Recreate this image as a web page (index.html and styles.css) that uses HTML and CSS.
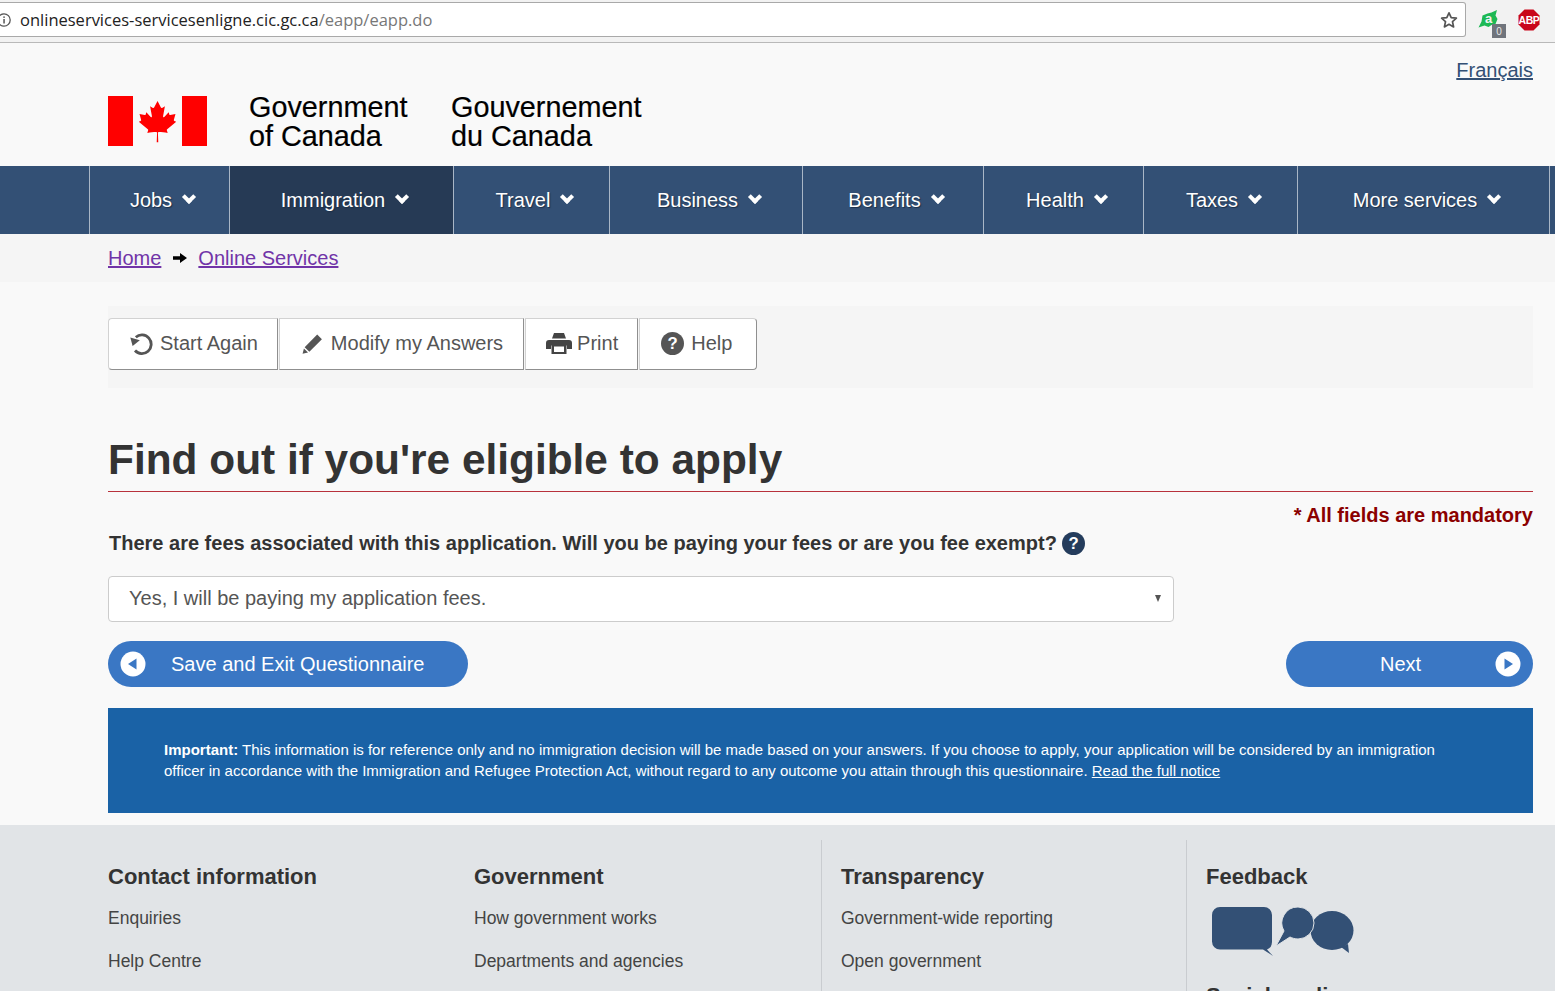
FILE: index.html
```html
<!DOCTYPE html>
<html lang="en">
<head>
  <meta charset="UTF-8" />
  <title>Find out if you're eligible to apply</title>
  <link rel="stylesheet" href="styles.css">
</head>
<body>
  <div class="browser-bar">
    <div class="url-box">
      <svg class="info-icon" viewBox="0 0 16 16"><circle cx="8" cy="8" r="6.200" fill="none" stroke="#555" stroke-width="1.300"/><rect x="7.300" y="7" width="1.500" height="4.500" fill="#555"/><rect x="7.300" y="4.400" width="1.500" height="1.500" fill="#555"/></svg>
      <span class="url">onlineservices-servicesenligne.cic.gc.ca<span class="url-path">/eapp/eapp.do</span></span>
      <svg class="star-icon" viewBox="0 0 18 18"><path d="M9 1.800l2.200 4.800 5.200.6-3.900 3.500 1.100 5.200L9 13.300l-4.600 2.600 1.100-5.200-3.900-3.500 5.200-.6z" fill="none" stroke="#555" stroke-width="1.700" stroke-linejoin="round"/></svg>
    </div>
    <div class="ext ext-green">
      <svg viewBox="0 0 22 22"><path d="M19 1l-1.500 5.500 2 3.500-2 5-4 1-3 2-4-1.500-6 2 3-6 1-6 5-2 4-1z" fill="#1db954"/><text x="10.500" y="13.500" text-anchor="middle" class="ext-a">a</text></svg>
      <span class="ext-count">0</span>
    </div>
    <div class="ext ext-abp">
      <svg viewBox="0 0 22 22"><polygon points="6.500,0.500 15.500,0.500 21.500,6.500 21.500,15.500 15.500,21.500 6.500,21.500 0.500,15.500 0.500,6.500" fill="#c9071a"/><text x="11" y="14.700" text-anchor="middle" class="abp-text">ABP</text></svg>
    </div>
  </div>

  <header class="site-header">
    <a class="lang-link" href="#">Français</a>
    <div class="brand">
      <svg class="flag" viewBox="0 0 99 50">
        <rect x="0" y="0" width="25" height="50" fill="#f00"/>
        <rect x="74" y="0" width="25" height="50" fill="#f00"/>
        <path transform="translate(4 0.500) scale(.92)" fill="#f00" d="M49.500 5l-3.600 6.800c-.4.700-1.100.7-1.900.3l-2.600-1.400 1.900 10.300c.4 1.900-.9 1.900-1.500 1.100l-4.500-5.100-.7 2.600c-.1.300-.5.700-1 .6l-5.700-1.200 1.500 5.500c.3 1.200.6 1.700-.3 2l-2 1 9.800 8c.4.300.6.800.4 1.300l-.9 2.800c3.400-.4 6.400-1 9.800-1 .3 0 .8.300.8.700l-.4 10.300h1.700l-.4-10.300c0-.4.500-.7.800-.7 3.400 0 6.400.6 9.800 1l-.9-2.800c-.2-.5 0-1 .4-1.300l9.800-8-2-1c-.9-.3-.6-.8-.3-2l1.500-5.500-5.700 1.200c-.5.100-.9-.3-1-.6l-.7-2.600-4.500 5.100c-.6.800-1.900.8-1.500-1.100l1.900-10.300-2.600 1.400c-.8.400-1.500.4-1.900-.3z"/>
      </svg>
      <div class="wordmark">Government<br>of Canada</div>
      <div class="wordmark">Gouvernement<br>du Canada</div>
    </div>
  </header>

  <nav class="main-nav">
    <a class="nav-item w-jobs" href="#">Jobs<i class="chev"></i></a>
    <a class="nav-item w-imm active" href="#">Immigration<i class="chev"></i></a>
    <a class="nav-item w-travel" href="#">Travel<i class="chev"></i></a>
    <a class="nav-item w-bus" href="#">Business<i class="chev"></i></a>
    <a class="nav-item w-ben" href="#">Benefits<i class="chev"></i></a>
    <a class="nav-item w-health" href="#">Health<i class="chev"></i></a>
    <a class="nav-item w-tax" href="#">Taxes<i class="chev"></i></a>
    <a class="nav-item w-more" href="#">More services<i class="chev"></i></a>
  </nav>

  <div class="breadcrumb">
    <a href="#">Home</a>
    <svg class="crumb-arrow" viewBox="0 0 14 12"><path d="M0 4.300h7V1l7 5-7 5V7.700H0z" fill="#000"/></svg>
    <a href="#">Online Services</a>
  </div>

  <main class="content">
    <div class="toolbar">
      <div class="btn-group">
        <a class="tool-btn" href="#">
          <svg class="tool-icon" viewBox="0 0 23 23"><path d="M5.800 5.200A9.300 9.300 0 1 1 5 18.500" fill="none" stroke="#555" stroke-width="2.800"/><path d="M0.300 5.500l9.500 2.700-7.200 5.800z" fill="#555"/></svg>
          Start Again
        </a>
        <a class="tool-btn btn-modify" href="#">
          <svg class="tool-icon" viewBox="0 0 22 22"><path d="M15.500 2.500l4.500 4.500L8 19l-4.500-4.500zM2.800 15.700l3.900 3.900-5.200 1.300z" fill="#555"/></svg>
          Modify my Answers
        </a>
        <a class="tool-btn btn-print" href="#">
          <svg class="tool-icon print" viewBox="0 0 26 21"><path d="M8 0h10l2 5.500H6zM3 7h20a3 3 0 0 1 3 3v6h-5v-3.500H5V16H0v-6a3 3 0 0 1 3-3zM5.500 12h15v9h-15z" fill="#444"/><path d="M8 13.500h10v5.500H8z" fill="#fff"/></svg>
          Print
        </a>
        <a class="tool-btn" href="#">
          <svg class="tool-icon" viewBox="0 0 22 22"><circle cx="11" cy="11" r="11" fill="#555"/><text x="11" y="16.500" text-anchor="middle" class="q-mark">?</text></svg>
          Help
        </a>
      </div>
    </div>

    <h1>Find out if you're eligible to apply</h1>
    <p class="mandatory">* All fields are mandatory</p>

    <div class="question">
      There are fees associated with this application. Will you be paying your fees or are you fee exempt?
      <svg class="help-icon" viewBox="0 0 22 22"><circle cx="11" cy="11" r="11" fill="#243c5c"/><text x="11" y="16.500" text-anchor="middle" class="q-mark">?</text></svg>
    </div>

    <div class="select-box">
      <span>Yes, I will be paying my application fees.</span>
      <i class="select-arrow"></i>
    </div>

    <div class="actions">
      <a class="pill pill-save" href="#">
        <svg class="pill-icon" viewBox="0 0 26 26"><circle cx="13" cy="13" r="12.500" fill="#fff"/><path d="M16.500 7.500v11L8 13z" fill="#3a77c4"/></svg>
        Save and Exit Questionnaire
      </a>
      <a class="pill pill-next" href="#">
        Next
        <svg class="pill-icon" viewBox="0 0 26 26"><circle cx="13" cy="13" r="12.500" fill="#fff"/><path d="M9.500 7.500v11L18 13z" fill="#3a77c4"/></svg>
      </a>
    </div>

    <div class="notice">
      <b>Important:</b> This information is for reference only and no immigration decision will be made based on your answers. If you choose to apply, your application will be considered by an immigration officer in accordance with the Immigration and Refugee Protection Act, without regard to any outcome you attain through this questionnaire. <a href="#">Read the full notice</a>
    </div>
  </main>

  <footer class="site-footer">
    <div class="foot-col col-contact">
      <h3>Contact information</h3>
      <a href="#">Enquiries</a>
      <a href="#">Help Centre</a>
    </div>
    <div class="foot-col col-gov">
      <h3>Government</h3>
      <a href="#">How government works</a>
      <a href="#">Departments and agencies</a>
    </div>
    <div class="foot-col col-trans">
      <h3>Transparency</h3>
      <a href="#">Government-wide reporting</a>
      <a href="#">Open government</a>
    </div>
    <div class="foot-col col-feed">
      <h3>Feedback</h3>
      <svg class="feedback-icon" viewBox="0 0 142 50">
        <path fill="#335075" d="M8 0h44a8 8 0 0 1 8 8v27a8 8 0 0 1-5 7.500l6 6.500-10-6.500H8a8 8 0 0 1-8-8V8a8 8 0 0 1 8-8z"/>
        <ellipse cx="120" cy="23.500" rx="21.500" ry="19.500" fill="#335075"/>
        <path fill="#335075" d="M129 40l8 6-1-9z"/>
        <path fill="#335075" stroke="#e1e4e7" stroke-width="1" d="M86 0a16 16 0 0 1 0 32c-3 0-6-1-8-2l-14 9 8-15a16 16 0 0 1 14-24z"/>
      </svg>
      <h3 class="social-head">Social media</h3>
    </div>
  </footer>
</body>
</html>
```

FILE: styles.css
```css
html, body {
  margin: 0;
  height: 991px;
  overflow: hidden;
}
body {
  background: #f9f9f9;
  font-family: "Liberation Sans", Arial, sans-serif;
  color: #333;
}
a {
  color: inherit;
}

/* browser chrome */
.browser-bar {
  height: 43px;
  box-sizing: border-box;
  background: #f2f2f2;
  border-bottom: 1px solid #b9b9b9;
  display: flex;
  align-items: flex-start;
  padding-top: 2px;
}
.url-box {
  width: 1467px;
  height: 35px;
  box-sizing: border-box;
  margin-left: -1px;
  background: #fff;
  border: 1px solid #a9a9a9;
  border-left: none;
  border-radius: 0 3px 3px 0;
  display: flex;
  align-items: center;
}
.info-icon {
  width: 16px;
  height: 16px;
  margin: 0 8px 0 -3px;
  flex: none;
}
.url {
  font-family: "Open Sans", sans-serif;
  font-size: 16.500px;
  color: #222;
  flex: 1;
}
.url-path {
  color: #777;
}
.star-icon {
  width: 18px;
  height: 18px;
  margin-right: 7px;
}
.ext {
  position: relative;
  width: 22px;
  height: 22px;
  margin-top: 7px;
}
.ext svg {
  display: block;
  width: 22px;
  height: 22px;
}
.ext-green {
  margin-left: 12px;
}
.ext-abp {
  margin-left: 18px;
}
.ext-count {
  position: absolute;
  left: 14px;
  top: 15px;
  width: 14px;
  height: 14px;
  background: #70747c;
  color: #e8e8e8;
  font-size: 10px;
  line-height: 15px;
  text-align: center;
}
.ext-a {
  fill: #f2f2f2;
  font: bold 13px "Liberation Sans", sans-serif;
}
.abp-text {
  fill: #fff;
  font: bold 10.500px "Liberation Sans", sans-serif;
  letter-spacing: -0.4px;
}

/* header */
.site-header {
  position: relative;
  height: 123px;
  box-sizing: border-box;
  padding: 48px 0 0 108px;
}
.lang-link {
  position: absolute;
  top: 16px;
  right: 22px;
  font-size: 20px;
  color: #335075;
}
.brand {
  display: flex;
  align-items: flex-start;
}
.flag {
  width: 99px;
  height: 50px;
  margin: 5px 42px 0 0;
  flex: none;
}
.wordmark {
  font-size: 28.800px;
  line-height: 29px;
  margin-top: 2px;
  color: #000;
  width: 202px;
  -webkit-text-stroke: 0.2px #000;
}

/* nav */
.main-nav {
  height: 68px;
  background: #335075;
  display: flex;
  padding-left: 89px;
}
.nav-item {
  display: flex;
  align-items: center;
  justify-content: center;
  box-sizing: border-box;
  padding-left: 7px;
  border-left: 1px solid #a9b6c6;
  color: #fff;
  font-size: 20px;
  text-decoration: none;
  text-shadow: 1px 1px 1px #1d3048;
}
.nav-item.active {
  background: #263a55;
}
.w-jobs { width: 140px; }
.w-imm { width: 224px; }
.w-travel { width: 156px; }
.w-bus { width: 193px; }
.w-ben { width: 181px; }
.w-health { width: 160px; }
.w-tax { width: 154px; }
.w-more { width: 253px; border-right: 1px solid #a9b6c6; }
.chev {
  width: 10px;
  height: 10px;
  margin: -6px 2px 0 12px;
  border-right: 4px solid #fff;
  border-bottom: 4px solid #fff;
  box-sizing: border-box;
  transform: rotate(45deg);
}

/* breadcrumb */
.breadcrumb {
  height: 48px;
  background: #f5f5f5;
  display: flex;
  align-items: center;
  padding-left: 108px;
  font-size: 20px;
  color: #7134a8;
}
.crumb-arrow {
  width: 14px;
  height: 12px;
  margin: 0 11px 0 12px;
}

/* main */
.content {
  padding: 24px 22px 0 108px;
}
.toolbar {
  height: 82px;
  box-sizing: border-box;
  padding-top: 12px;
  background: #f5f5f5;
}
.btn-group {
  display: flex;
  gap: 1px;
}
.tool-btn {
  height: 52px;
  box-sizing: border-box;
  display: flex;
  align-items: center;
  gap: 7px;
  padding: 0 19px 2px 21px;
  background: #fff;
  border: 1px solid #d2d2d2;
  border-bottom: 1px solid #8f8f8f;
  border-right: 1px solid #8f8f8f;
  color: #555;
  font-size: 20px;
  text-decoration: none;
}
.tool-btn:first-child {
  border-radius: 4px 0 0 4px;
}
.tool-btn:last-child {
  border-radius: 0 4px 4px 0;
  padding-right: 24px;
}
.btn-modify {
  padding-right: 20px;
}
.btn-print {
  padding-left: 20px;
}
.tool-icon {
  width: 23px;
  height: 23px;
  flex: none;
}
.tool-icon.print {
  width: 26px;
  height: 21px;
  margin-right: -2px;
}
.q-mark {
  fill: #fff;
  font: bold 16px "Liberation Sans", sans-serif;
}
h1 {
  margin: 43px 0 0;
  height: 61px;
  box-sizing: border-box;
  font-size: 42.400px;
  line-height: 57px;
  font-weight: bold;
  color: #333;
  border-bottom: 1px solid #b8323c;
}
.mandatory {
  margin: 11px 0 0;
  text-align: right;
  font-size: 20px;
  line-height: 24px;
  font-weight: bold;
  color: #8b0000;
}
.question {
  display: flex;
  align-items: center;
  gap: 5px;
  margin: 3px 0 0 1px;
  height: 26px;
  font-size: 20px;
  font-weight: bold;
  color: #333;
}
.help-icon {
  width: 23px;
  height: 23px;
}
.select-box {
  display: flex;
  align-items: center;
  justify-content: space-between;
  width: 1066px;
  height: 46px;
  box-sizing: border-box;
  margin-top: 20px;
  padding: 0 12px 2px 20px;
  background: #fff;
  border: 1px solid #ccc;
  border-radius: 4px;
  font-size: 20px;
  color: #555;
}
.select-arrow {
  width: 0;
  height: 0;
  border-left: 3.500px solid transparent;
  border-right: 3.500px solid transparent;
  border-top: 7px solid #555;
}
.actions {
  display: flex;
  justify-content: space-between;
  margin-top: 19px;
}
.pill {
  height: 46px;
  box-sizing: border-box;
  display: flex;
  align-items: center;
  border-radius: 23px;
  background: #3a77c4;
  color: #fff;
  font-size: 20px;
  text-decoration: none;
}
.pill-save {
  width: 360px;
  padding-left: 12px;
  gap: 25px;
}
.pill-next {
  width: 247px;
  padding: 0 12px 0 94px;
  justify-content: space-between;
}
.pill-icon {
  width: 26px;
  height: 26px;
  flex: none;
}
.notice {
  margin-top: 21px;
  height: 105px;
  box-sizing: border-box;
  padding: 31px 90px 0 56px;
  background: #1a62a6;
  color: #fff;
  font-size: 15px;
  line-height: 21px;
}

/* footer */
.site-footer {
  margin-top: 12px;
  height: 300px;
  background: #e1e4e7;
  display: flex;
  padding: 15px 0 0 108px;
}
.foot-col {
  box-sizing: border-box;
  padding-top: 24px;
}
.col-contact { width: 366px; }
.col-gov { width: 347px; }
.col-trans { width: 365px; padding-left: 19px; border-left: 1px solid #c9ccd0; }
.col-feed { padding-left: 19px; border-left: 1px solid #c9ccd0; }
.foot-col h3 {
  margin: 0 0 17px;
  font-size: 22px;
  line-height: 26px;
  font-weight: bold;
  color: #333;
}
.foot-col a {
  display: block;
  font-size: 17.500px;
  line-height: 22px;
  margin-bottom: 21px;
  color: #444;
  text-decoration: none;
}
.feedback-icon {
  display: block;
  width: 142px;
  height: 50px;
  margin: 0 0 0 6px;
}
.foot-col .social-head {
  margin-top: 26px;
}
```
